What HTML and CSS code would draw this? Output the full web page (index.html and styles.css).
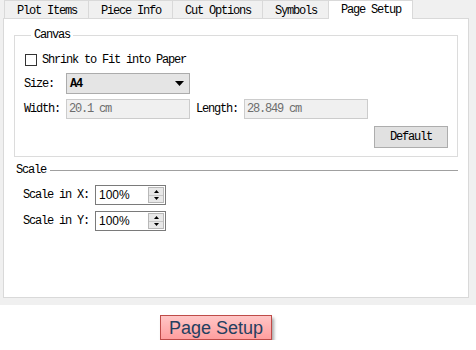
FILE: index.html
```html
<!DOCTYPE html>
<html lang="en">
<head>
  <meta charset="UTF-8" />
  <title>Page Setup</title>
  <link rel="stylesheet" href="styles.css">
</head>
<body>

<div class="dialog">
  <!-- tab bar -->
  <div class="tabs">
    <div class="tab">Plot Items</div>
    <div class="tab">Piece Info</div>
    <div class="tab">Cut Options</div>
    <div class="tab">Symbols</div>
    <div class="tab active">Page Setup</div>
  </div>

  <div class="panel">
    <fieldset class="group">
      <legend>Canvas</legend>
      <label class="check"><span class="box"></span>Shrink to Fit into Paper</label>
      <div class="row size-row">
        <span class="lbl">Size:</span>
        <div class="combo">
          <span>A4</span>
          <svg width="9" height="5" viewBox="0 0 9 5"><polygon points="0,0 9,0 4.5,5" fill="#000"/></svg>
        </div>
      </div>
      <div class="row dim-row">
        <span class="lbl">Width:</span>
        <div class="field">20.1 cm</div>
        <span class="lbl lbl-len">Length:</span>
        <div class="field">28.849 cm</div>
      </div>
      <div class="actions">
        <button class="btn">Default</button>
      </div>
    </fieldset>

    <div class="section-title"><span>Scale</span><i class="rule"></i></div>

    <div class="row spin-row first">
      <span class="lbl lbl-scale">Scale in X:</span>
      <div class="spin">
        <span class="spin-val">100%</span>
        <div class="spin-btns">
          <b><svg width="5" height="3" viewBox="0 0 5 3"><polygon points="2.5,0 5,3 0,3" fill="#000"/></svg></b>
          <b><svg width="5" height="3" viewBox="0 0 5 3"><polygon points="0,0 5,0 2.5,3" fill="#000"/></svg></b>
        </div>
      </div>
    </div>
    <div class="row spin-row">
      <span class="lbl lbl-scale">Scale in Y:</span>
      <div class="spin">
        <span class="spin-val">100%</span>
        <div class="spin-btns">
          <b><svg width="5" height="3" viewBox="0 0 5 3"><polygon points="2.5,0 5,3 0,3" fill="#000"/></svg></b>
          <b><svg width="5" height="3" viewBox="0 0 5 3"><polygon points="0,0 5,0 2.5,3" fill="#000"/></svg></b>
        </div>
      </div>
    </div>
  </div><!-- panel -->
</div><!-- dialog -->

<div class="footer">
  <button class="page-btn">Page Setup</button>
</div>

</body>
</html>
```

FILE: styles.css
```css
/* reset */
* {
  margin: 0;
  padding: 0;
  box-sizing: border-box;
}
body {
  background: #fff;
  color: #000;
  font-family: "Liberation Mono", "DejaVu Sans Mono", monospace;
  font-size: 12px;
  letter-spacing: -1.2px;
  line-height: 14px;
}

/* dialog frame */
.dialog {
  width: 476px;
  height: 305px;
  background: #f0f0f0;
  padding: 0 7px 0 3px;
}

/* tabs */
.tabs {
  display: flex;
  height: 18px;
  padding-left: 1px;
}
.tab {
  height: 18px;
  line-height: 18px;
  padding: 1px 11px 0 12px;
  border: 1px solid #d9d9d9;
  border-bottom: none;
  margin-right: -1px;
  background: #f0f0f0;
}
.tab.active {
  position: relative;
  z-index: 1;
  height: 19px;
  background: #fff;
  padding-top: 0;
}

/* white page */
.panel {
  height: 280px;
  background: #fff;
  border: 1px solid #d9d9d9;
  padding: 0 10px;
}

/* group box */
.group {
  margin-top: 10px;
  border: 1px solid #dcdcdc;
  padding: 0 9px 8px 9px;
  min-width: 0;
}
.group legend {
  margin-left: 7px;
  padding: 0 3px;
  line-height: 13px;
}

.check {
  display: flex;
  align-items: center;
  height: 14px;
  margin-top: 11px;
  padding-left: 1px;
}
.check .box {
  width: 12px;
  height: 12px;
  border: 1px solid #333;
  background: #fff;
  margin-right: 5px;
}

.row {
  display: flex;
  align-items: center;
}
.lbl {
  width: 42px;
  flex: none;
}
.size-row {
  margin-top: 6px;
}
.combo {
  width: 124px;
  height: 21px;
  background: #e5e5e5;
  border: 1px solid #acacac;
  display: flex;
  align-items: center;
  justify-content: space-between;
  padding: 0 5px 0 3px;
  font-weight: bold;
}
.dim-row {
  margin-top: 5px;
}
.field {
  width: 124px;
  height: 20px;
  line-height: 18px;
  background: #f0f0f0;
  border: 1px solid #cccccc;
  color: #6d6d6d;
  padding-left: 2px;
}
.lbl-len {
  width: 54px;
  padding-left: 6px;
}
.actions {
  display: flex;
  justify-content: flex-end;
  margin-top: 7px;
}
.btn {
  width: 74px;
  height: 22px;
  background: #e1e1e1;
  border: 1px solid #adadad;
  font: inherit;
  letter-spacing: inherit;
  color: #000;
}

/* scale section */
.section-title {
  display: flex;
  align-items: center;
  height: 14px;
  margin-top: 6px;
  padding-left: 2px;
}
.section-title .rule {
  flex: 1;
  height: 1px;
  background: #a0a0a0;
  margin-left: 4px;
}
.spin-row {
  padding-left: 9px;
  margin-top: 6px;
}
.spin-row.first {
  margin-top: 8px;
}
.lbl-scale {
  width: 72px;
}
.spin {
  width: 71px;
  height: 20px;
  border: 1px solid #7a7a7a;
  display: flex;
  align-items: center;
  justify-content: space-between;
  padding: 1px 1px 1px 3px;
}
.spin-val {
  font-family: "Liberation Sans", Arial, sans-serif;
  font-size: 12px;
  letter-spacing: 0;
}
.spin-btns {
  width: 16px;
  height: 16px;
  display: flex;
  flex-direction: column;
  border: 1px solid #b8b8b8;
  background: #e8e8e8;
}
.spin-btns b {
  flex: 1;
  display: flex;
  align-items: center;
  justify-content: center;
}
.spin-btns b + b {
  border-top: 1px solid #c8c8c8;
}

/* bottom caption button */
.footer {
  padding: 10px 0 0 160px;
}
.page-btn {
  width: 112px;
  height: 25px;
  border: 1px solid #be4b48;
  background: linear-gradient(#ffc6c6, #ff9e9e);
  box-shadow: 2px 3px 3px rgba(0,0,0,0.35);
  color: #243f60;
  font-family: "Liberation Sans", Arial, sans-serif;
  font-size: 18px;
  line-height: 22px;
}
```
